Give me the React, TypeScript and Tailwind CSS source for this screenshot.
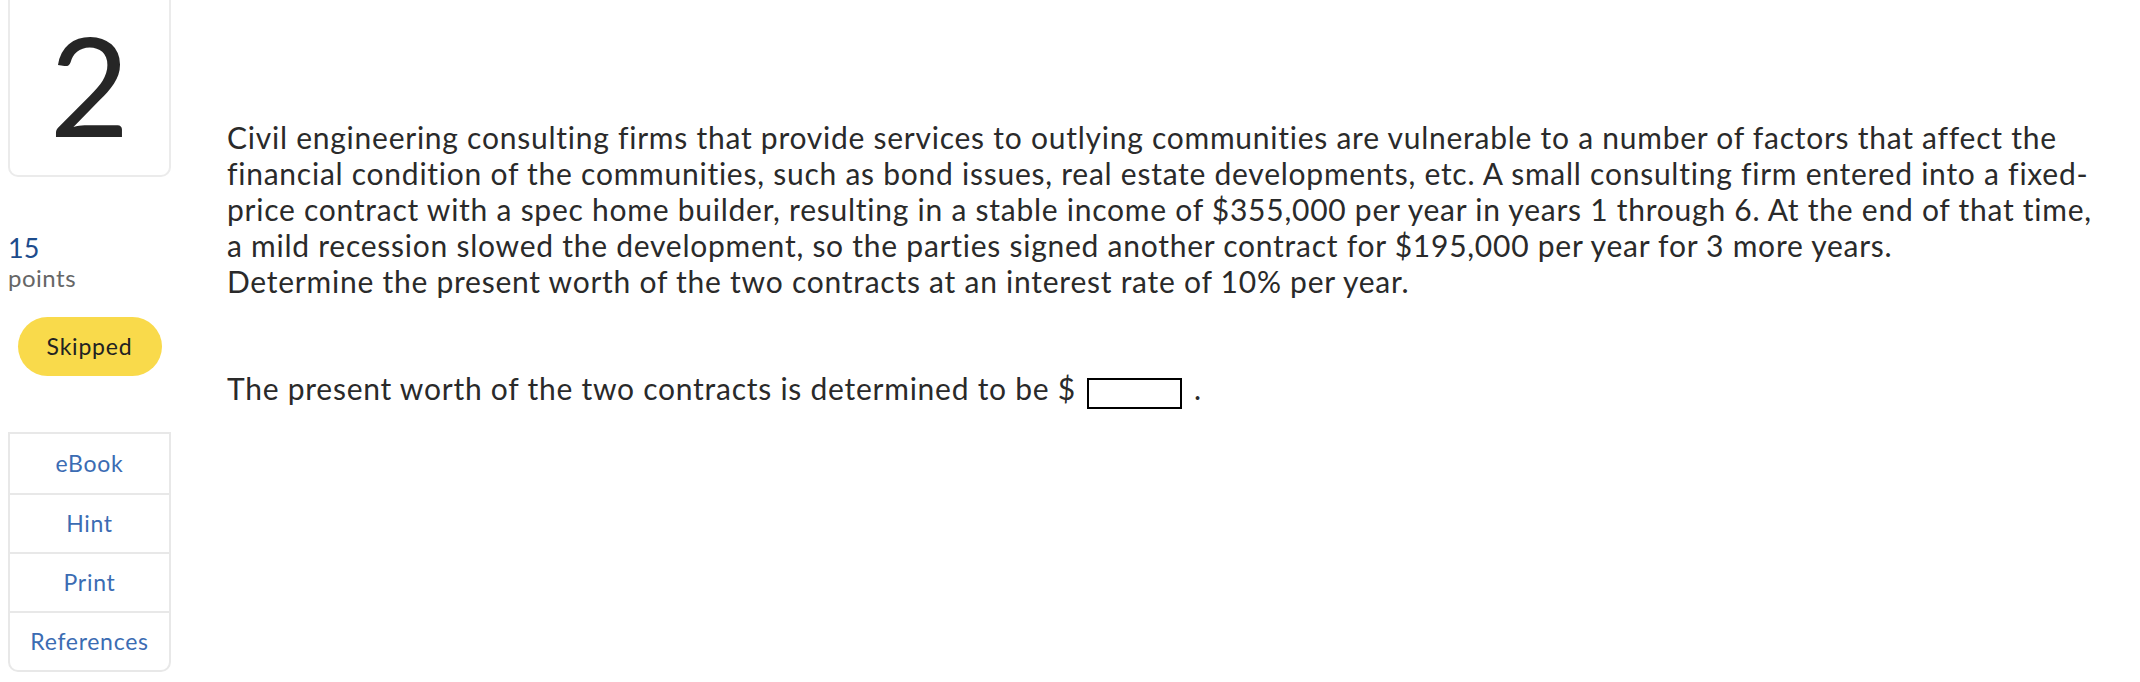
const links = ["eBook", "Hint", "Print", "References"];

export default function App() {
  return (
    <div className="flex min-h-screen bg-white font-['Lato',sans-serif] text-[#2a2a2a] [font-variant-ligatures:none]">
      <aside className="ml-2 flex w-[163px] shrink-0 flex-col">
        <div className="flex h-[177px] items-center justify-center rounded-b-[10px] border-x-2 border-b-2 border-[#ebebeb] pb-2 text-[138px] leading-none text-[#262626]">
          2
        </div>

        <div className="mt-[56px] text-[27px] leading-[30px] text-[#1d4c8c]">15</div>
        <div className="text-[24px] leading-[30px] tracking-[0.5px] text-[#666666]">points</div>

        <div className="mx-auto mt-[24px] flex h-[59px] w-[144px] items-center justify-center rounded-full bg-[#f9da4b] text-[23px] tracking-[0.8px] text-[#222]">
          Skipped
        </div>

        <div className="mt-[56px] overflow-hidden rounded-b-[10px] border-2 border-[#e8e8e8]">
          {links.map((l, i) => (
            <div
              key={l}
              className={
                "flex h-[59px] items-center justify-center text-[23px] tracking-[0.7px] text-[#3b6cb3]" +
                (i > 0 ? " border-t-2 border-[#e8e8e8]" : "")
              }
            >
              {l}
            </div>
          ))}
        </div>
      </aside>

      <main className="ml-[56px] pr-[30px] pt-[119px] text-[30px] leading-[36px] tracking-[0.75px]">
        <p>
          Civil engineering consulting firms that provide services to outlying communities are
          vulnerable to a number of factors that affect the financial condition of the
          communities, such as bond issues, real estate developments, etc. A small consulting
          firm entered into a fixed-price contract with a spec home builder, resulting in a stable
          income of $355,000 per year in years 1 through 6. At the end of that time, a mild
          recession slowed the development, so the parties signed another contract for $195,000
          per year for 3 more years.
          <br />
          Determine the present worth of the two contracts at an interest rate of 10% per year.
        </p>

        <p className="mt-[71px]">
          The present worth of the two contracts is determined to be ${" "}
          <span className="mx-[3px] inline-block h-[31px] w-[95px] border-2 border-black align-[-9px]" />
          {" "}.
        </p>
      </main>
    </div>
  );
}
